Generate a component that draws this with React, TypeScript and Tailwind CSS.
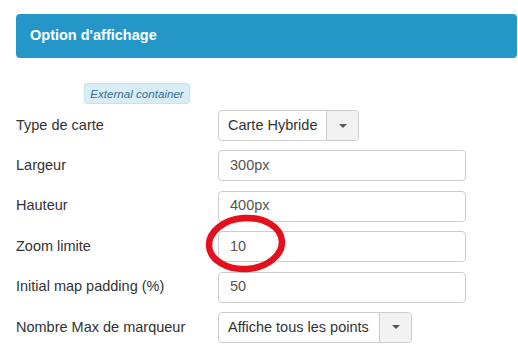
import React from "react";

const Caret = () => (
  <svg width="8" height="4" viewBox="0 0 8 4" className="block">
    <path d="M0 0 L8 0 L4 4 Z" fill="#555" />
  </svg>
);

function Select({ value, width }: { value: string; width: string }) {
  return (
    <div className={`flex h-[31px] ${width} rounded-[4px] border border-[#ccc] bg-white overflow-hidden`}>
      <div className="flex flex-1 items-center whitespace-nowrap pl-[9px] text-[14.5px] text-[#333]">{value}</div>
      <div className="flex w-[32px] shrink-0 items-center justify-center border-l border-[#ccc] bg-[#f2f2f2]">
        <Caret />
      </div>
    </div>
  );
}

function Input({ value }: { value: string }) {
  return (
    <div className="flex h-[31px] w-[248px] items-center rounded-[4px] border border-[#ccc] bg-white pl-[11px] text-[14.5px] text-[#555]">
      {value}
    </div>
  );
}

export default function App() {
  const rows: { label: string; el: React.ReactNode }[] = [
    { label: "Type de carte", el: <Select value="Carte Hybride" width="w-[141px]" /> },
    { label: "Largeur", el: <Input value="300px" /> },
    { label: "Hauteur", el: <Input value="400px" /> },
    { label: "Zoom limite", el: <Input value="10" /> },
    { label: "Initial map padding (%)", el: <Input value="50" /> },
    { label: "Nombre Max de marqueur", el: <Select value="Affiche tous les points" width="w-[194px]" /> },
  ];
  return (
    <div
      className="relative h-[363px] w-[518px] overflow-hidden bg-white pl-[16px] pt-[14px]"
      style={{ fontFamily: '"Liberation Sans", Arial, sans-serif' }}
    >
      <div className="mr-[1px] flex h-[44px] items-center rounded-[4px] bg-[#2596c8] pl-[14px] text-[14.5px] font-bold text-white">
        Option d'affichage
      </div>
      <div className="ml-[68px] mt-[25px] flex h-[21px] w-[106px] items-center justify-center rounded-[3px] border border-[#bce8f1] bg-[#d9edf7] text-[11.6px] italic text-[#31708f]">
        External container
      </div>
      <div className="mt-[6px] flex flex-col gap-y-[9.4px]">
        {rows.map((r) => (
          <div key={r.label} className="flex items-center">
            <div className="w-[202px] text-[14.5px] text-[#333]">{r.label}</div>
            {r.el}
          </div>
        ))}
      </div>
      <svg
        className="pointer-events-none absolute left-[203px] top-[212px]"
        width="86"
        height="64"
        viewBox="0 0 86 64"
      >
        <ellipse cx="42.5" cy="31.5" rx="36.5" ry="25.5" fill="none" stroke="#e5101d" strokeWidth="6.5" transform="rotate(-4 43 32)" />
      </svg>
    </div>
  );
}
